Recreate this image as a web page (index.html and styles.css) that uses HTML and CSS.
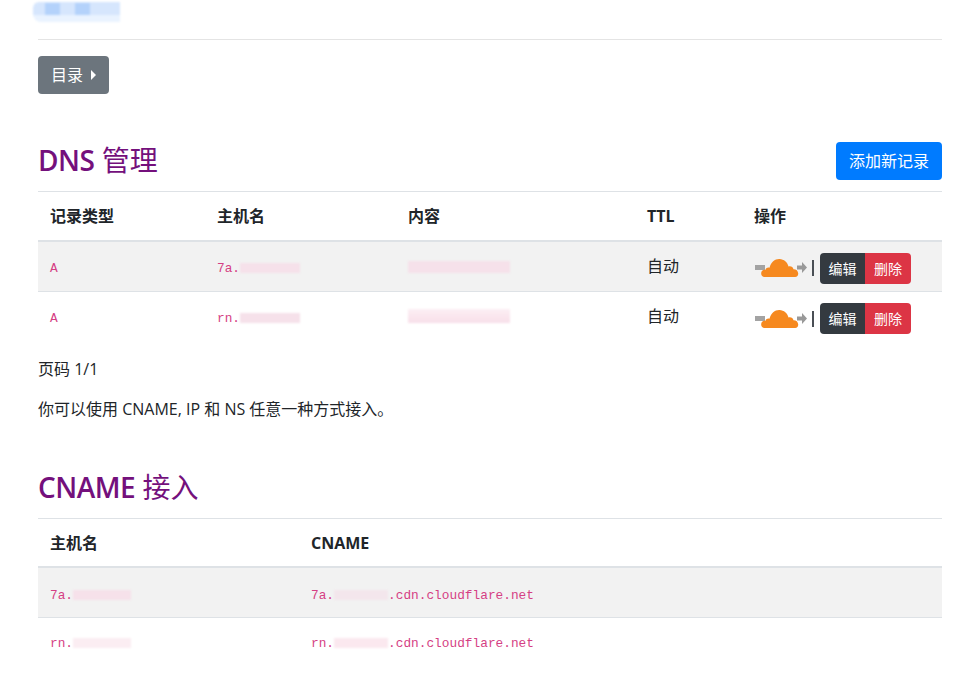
FILE: index.html
```html
<!DOCTYPE html>
<html lang="zh-CN">
<head>
<meta charset="utf-8">
<title>DNS 管理</title>
<link rel="stylesheet" href="styles.css">
</head>
<body>
<main class="container">
  <header class="site-head"><div class="logo-blur"></div></header>
  <button class="btn btn-secondary toc-btn">目录 <span class="caret"></span></button>

  <section class="section-dns">
    <div class="title-row">
      <h3 class="title"><span class="latin">DNS</span> 管理</h3>
      <button class="btn btn-primary">添加新记录</button>
    </div>
    <table class="table table-dns">
      <colgroup><col class="c1"><col class="c2"><col class="c3"><col class="c4"><col></colgroup>
      <thead>
        <tr><th>记录类型</th><th>主机名</th><th>内容</th><th>TTL</th><th>操作</th></tr>
      </thead>
      <tbody>
        <tr>
          <td><code>A</code></td>
          <td><code>7a.<span class="blur w-host"></span></code></td>
          <td><code><span class="blur w-ip"></span></code></td>
          <td>自动</td>
          <td>
            <div class="actions">
              <svg class="cf" viewBox="0 0 52 20" width="52" height="20" aria-hidden="true">
                <rect x="0" y="7" width="10" height="5" fill="#a3a3a3"/>
                <path d="M42 7.500h5V4l5 5.500-5 5.500v-3.500h-5z" fill="#999"/>
                <path transform="translate(5 0)" d="M5 19c-2.700-.2-4-2-3.800-4 .2-2.200 2-3.500 4.300-3.300.5-1.700 2.300-2.600 4-2C11 4 15 .8 19.500 1c4.500.2 8 3.300 9 7.500 1-.5 2.300-.5 3.300.2 1 .7 1.500 1.600 1.600 2.500 2.500-.2 4.600 1.500 4.800 4 .2 2-1 3.500-3 3.800z" fill="#f6891f"/>
              </svg>
              <span class="sep"></span>
              <div class="btn-group">
                <button class="btn btn-sm btn-dark">编辑</button><button class="btn btn-sm btn-danger">删除</button>
              </div>
            </div>
          </td>
        </tr>
        <tr>
          <td><code>A</code></td>
          <td><code>rn.<span class="blur w-host2"></span></code></td>
          <td><code><span class="blur w-ip2"></span></code></td>
          <td>自动</td>
          <td>
            <div class="actions">
              <svg class="cf" viewBox="0 0 52 20" width="52" height="20" aria-hidden="true">
                <rect x="0" y="7" width="10" height="5" fill="#a3a3a3"/>
                <path d="M42 7.500h5V4l5 5.500-5 5.500v-3.500h-5z" fill="#999"/>
                <path transform="translate(5 0)" d="M5 19c-2.700-.2-4-2-3.800-4 .2-2.200 2-3.500 4.300-3.300.5-1.700 2.300-2.600 4-2C11 4 15 .8 19.500 1c4.500.2 8 3.300 9 7.500 1-.5 2.300-.5 3.300.2 1 .7 1.500 1.600 1.600 2.500 2.500-.2 4.600 1.500 4.800 4 .2 2-1 3.500-3 3.800z" fill="#f6891f"/>
              </svg>
              <span class="sep"></span>
              <div class="btn-group">
                <button class="btn btn-sm btn-dark">编辑</button><button class="btn btn-sm btn-danger">删除</button>
              </div>
            </div>
          </td>
        </tr>
      </tbody>
    </table>
    <p class="para">页码 1/1</p>
    <p class="para">你可以使用 CNAME, IP 和 NS 任意一种方式接入。</p>
  </section>

  <section class="section-cname">
    <h3 class="title"><span class="latin">CNAME</span> 接入</h3>
    <table class="table table-cname">
      <colgroup><col class="c5"><col></colgroup>
      <thead>
        <tr><th>主机名</th><th>CNAME</th></tr>
      </thead>
      <tbody>
        <tr>
          <td><code>7a.<span class="blur w-host3"></span></code></td>
          <td><code>7a.<span class="blur w-name"></span>.cdn.cloudflare.net</code></td>
        </tr>
        <tr>
          <td><code>rn.<span class="blur w-host4"></span></code></td>
          <td><code>rn.<span class="blur w-name2"></span>.cdn.cloudflare.net</code></td>
        </tr>
      </tbody>
    </table>
  </section>
</main>
</body>
</html>
```
FILE: styles.css
```css
* { box-sizing: border-box; }
html, body { margin: 0; padding: 0; background: #fff; }
body {
  font-family: "Open Sans", "Noto Sans CJK SC", sans-serif;
  font-size: 16px;
  line-height: 24px;
  color: #212529;
  overflow: hidden;
  height: 673px;
}
.container { padding: 0 12px 0 38px; }

.site-head {
  position: relative;
  height: 40px;
  border-bottom: 1px solid #e4e4e4;
}
.logo-blur {
  position: absolute;
  left: -5px;
  top: 2px;
  width: 87px;
  height: 20px;
  border-radius: 6px 0 0 8px;
  filter: blur(1px);
  background:
    linear-gradient(#b4d2fb, #b4d2fb) 12px 1px / 15px 12px no-repeat,
    linear-gradient(#b4d2fb, #b4d2fb) 42px 1px / 15px 12px no-repeat,
    linear-gradient(#d6e6fd 65%, #eaf3ff 65%);
}

.btn {
  display: inline-block;
  border: 0;
  border-radius: 4px;
  font: inherit;
  font-size: 16px;
  line-height: 24px;
  padding: 7px 13px;
  color: #fff;
  cursor: pointer;
}
.btn-secondary { background: #6c757d; }
.btn-primary { background: #007bff; }
.btn-dark { background: #343a40; }
.btn-danger { background: #dc3545; }
.btn-sm { font-size: 14px; line-height: 21px; padding: 5px 8.500px; border-radius: 0; }
.btn-danger.btn-sm { padding: 5px 9px; }

.toc-btn { display: flex; align-items: center; gap: 8px; margin-top: 16px; height: 38px; }
.caret {
  width: 0;
  height: 0;
  border-left: 5px solid #fff;
  border-top: 5px solid transparent;
  border-bottom: 5px solid transparent;
}

.section-dns { margin-top: 48px; }
.section-cname { margin-top: 48px; }
.title-row { display: flex; justify-content: space-between; align-items: flex-end; margin-bottom: 11px; }
.title-row .title { margin-bottom: 2px; }
.title {
  margin: 0;
  font-size: 28px;
  font-weight: 400;
  line-height: 36px;
  color: #74107c;
}
.latin { font-weight: 600; letter-spacing: -0.5px; }
.section-cname .title { margin-bottom: 13px; }

.table { width: 100%; border-collapse: collapse; table-layout: fixed; }
.table th, .table td {
  padding: 12px;
  text-align: left;
  vertical-align: top;
  border-top: 1px solid #dee2e6;
}
.table th { font-weight: 700; border-bottom: 2px solid #dee2e6; height: 49px; padding-bottom: 10px; }
.table td { height: 49px; }
.table-dns td { padding-top: 12px; padding-bottom: 0; }
.table-dns tbody tr:first-child td { height: 51px; }
.table tbody tr:nth-child(odd) { background: #f2f2f2; }
.table thead + tbody tr:first-child td { border-top: 0; }
.table-cname td { padding-bottom: 0; }
.table-cname tbody tr:first-child td { height: 50px; padding-top: 13px; }
.table-cname tbody tr:last-child td { padding-top: 11px; }
.c1 { width: 167px; }
.c2 { width: 191px; }
.c3 { width: 239px; }
.c4 { width: 107px; }
.c5 { width: 261px; }

code {
  font-family: "Liberation Mono", monospace;
  font-size: 12.8px;
  color: #d53f84;
  white-space: nowrap;
}
.blur {
  display: inline-block;
  height: 10px;
  vertical-align: -1px;
  background: #f6e1ea;
  filter: blur(1px);
}
.w-host { width: 60px; }
.w-host2 { width: 60px; }
.w-ip { width: 102px; height: 12px; }
.w-ip2 { width: 102px; height: 14px; background: linear-gradient(#fceff4, #f8dfe9); }
.w-host3 { width: 58px; }
.w-host4 { width: 58px; background: #fbedf2; }
.w-name { width: 54px; background: #f3e6ec; }
.w-name2 { width: 54px; background: #fbe8ef; }

.actions { display: flex; align-items: center; margin-top: -1px; }
.cf { display: block; margin-left: 1px; }
.sep { width: 2px; height: 16px; background: #4a4f55; margin: 0 6px 0 5px; }
.btn-group { display: flex; border-radius: 4px; overflow: hidden; }

.para { margin: 0 0 16px; }
.section-dns .table { margin-bottom: 16px; }
```
